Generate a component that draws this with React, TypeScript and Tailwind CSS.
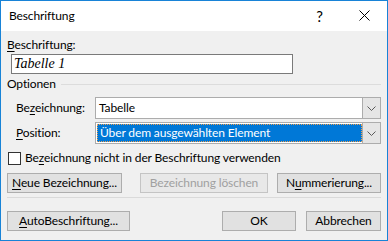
import type { ReactNode } from "react";

// access-key underline, like the Win32 dialogs draw it
function U({ children }: { children: ReactNode }) {
  return <span className="underline decoration-1 underline-offset-[2px]">{children}</span>;
}

function Btn({ children, className = "", disabled = false }: { children: ReactNode; className?: string; disabled?: boolean }) {
  return (
    <div
      className={`flex h-[20px] items-center justify-center border leading-[16px] ${
        disabled ? "border-[#c4c4c4] bg-[#e8e8e8] text-[#a0a0a0]" : "border-[#adadad] bg-[#e1e1e1] text-black"
      } ${className}`}
    >
      <span className="whitespace-nowrap">{children}</span>
    </div>
  );
}

function Chevron() {
  return (
    <svg width="9" height="5" viewBox="0 0 9 5" fill="none">
      <path d="M0.5 0.5 L4.5 4.5 L8.5 0.5" stroke="#5a5a5a" strokeWidth="1" />
    </svg>
  );
}

function Combo({ children }: { children: ReactNode }) {
  return (
    <div className="flex h-[22px] flex-1 border border-[#acacac] bg-white">
      <div className="flex min-w-0 flex-1 items-center">{children}</div>
      <div className="-my-px -mr-px flex w-[19px] items-center justify-center border border-[#acacac] bg-[#e5e5e5]">
        <Chevron />
      </div>
    </div>
  );
}

export default function App() {
  return (
    <div className="flex h-[241px] w-[388px] flex-col border border-[#1883d7] bg-[#f0f0f0] font-['Lato',sans-serif] text-[12px] leading-[16px] tracking-[-0.12px] text-black">
      {/* Title bar */}
      <div className="flex h-[30px] shrink-0 items-center bg-white pl-[8px]">
        <span className="leading-[16px]">Beschriftung</span>
        <div className="ml-auto flex h-full">
          <div className="flex w-[45px] items-center justify-center text-[15px]">?</div>
          <div className="flex w-[45px] items-center justify-center pb-[1px]">
            <svg width="11" height="11" viewBox="0 0 11 11">
              <path d="M0.5 0.5 L10.5 10.5 M10.5 0.5 L0.5 10.5" stroke="#000" strokeWidth="1" />
            </svg>
          </div>
        </div>
      </div>

      {/* Body */}
      <div className="flex flex-1 flex-col px-[6px] pt-[6px]">
        <div className="h-[16px]">
          <U>B</U>eschriftung:
        </div>
        <div className="ml-[4px] mt-[1px] flex h-[20px] w-[282px] items-center border border-[#7a7a7a] bg-white pl-[2px] font-['Liberation_Serif',serif] text-[14px] italic tracking-normal">
          Tabelle 1
        </div>

        <div className="mt-[2px] flex h-[16px] items-center">
          <span>Optionen</span>
          <div className="ml-[5px] h-px flex-1 bg-[#dcdcdc]" />
        </div>

        <div className="mt-[5px] flex items-center pl-[9px]">
          <div className="w-[79px]">
            Be<U>z</U>eichnung:
          </div>
          <Combo>
            <span className="pl-[3px]">Tabelle</span>
          </Combo>
        </div>

        <div className="mt-[3px] flex items-center pl-[9px]">
          <div className="w-[79px]">
            <U>P</U>osition:
          </div>
          <Combo>
            <div className="ml-px flex h-[18px] flex-1 items-center border border-dotted border-[#f0a050] bg-[#0078d7] pl-[2px] text-white">
              Über dem ausgewählten Element
            </div>
          </Combo>
        </div>

        <div className="mt-[6px] flex h-[16px] items-center gap-[4px] pl-[1px]">
          <div className="h-[13px] w-[13px] border border-[#333333] bg-white" />
          <span>
            Be<U>z</U>eichnung nicht in der Beschriftung verwenden
          </span>
        </div>

        <div className="mt-[7px] flex">
          <Btn className="w-[115px]">
            <U>N</U>eue Bezeichnung...
          </Btn>
          <Btn disabled className="ml-[18px] w-[128px]">
            Bezeichnung löschen
          </Btn>
          <Btn className="ml-[9px] w-[104px]">
            N<U>u</U>mmerierung...
          </Btn>
        </div>

        <div className="mt-[4px] h-px bg-[#dadada]" />

        <div className="mt-[13px] flex">
          <Btn className="w-[123px]">
            <U>A</U>utoBeschriftung...
          </Btn>
          <Btn className="ml-auto w-[74px]">OK</Btn>
          <Btn className="ml-[10px] w-[75px]">Abbrechen</Btn>
        </div>
      </div>
    </div>
  );
}
